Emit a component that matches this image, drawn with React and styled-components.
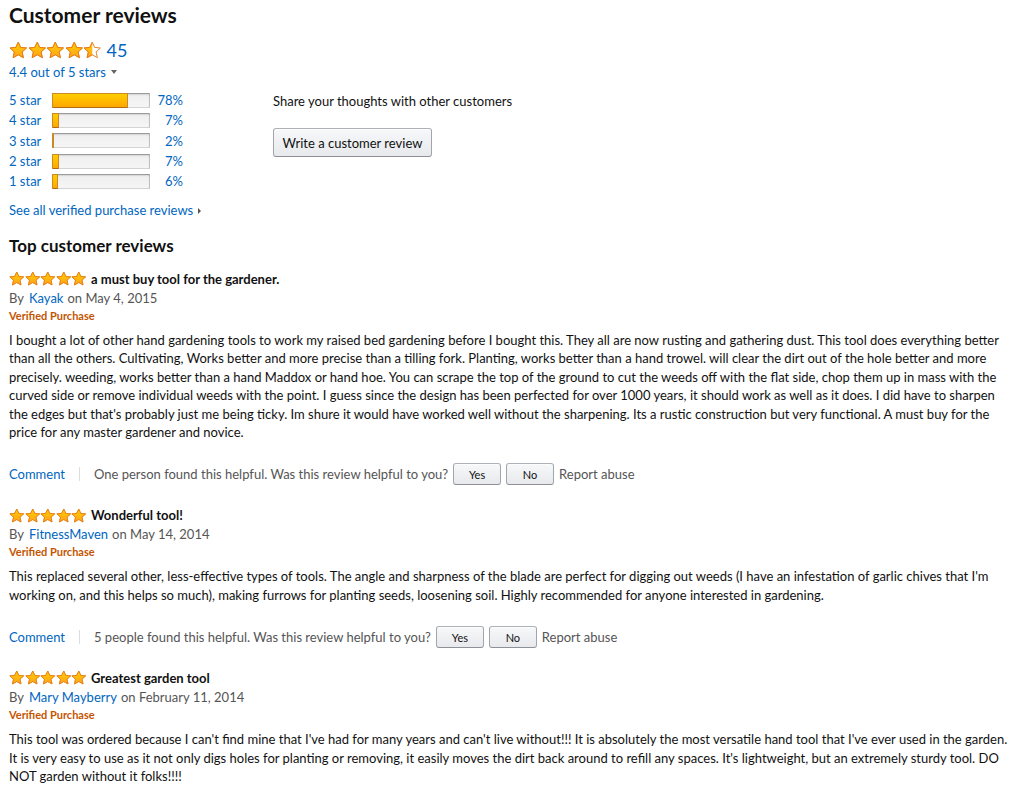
import styled, { createGlobalStyle } from 'styled-components';

const GlobalStyle = createGlobalStyle`
  body {
    margin: 0;
    background: #fff;
    color: #111;
    font-family: Lato, "Liberation Sans", Arial, sans-serif;
    font-size: 13px;
  }
`;

const Page = styled.div`
  padding: 0 9px;
`;

const Title = styled.h2`
  margin: 0;
  font-size: 21px;
  line-height: 30px;
  font-weight: 700;
`;

const Summary = styled.div`
  display: flex;
  gap: 9px;
`;

const LeftCol = styled.div`
  width: 255px;
`;

const RightCol = styled.div`
  padding-top: 62px;
`;

const RatingRow = styled.div`
  display: flex;
  align-items: center;
  margin-top: 7px;
  height: 26px;
  gap: 5px;
`;

const Count = styled.span`
  color: #0066c0;
  font-size: 18px;
`;

const Link = styled.a`
  color: #0066c0;
  text-decoration: none;
  line-height: 18px;
`;

const OutOf = styled.div`
  line-height: 18px;
  color: #0066c0;
`;

const Caret = styled.span`
  display: inline-block;
  margin-left: 5px;
  vertical-align: middle;
  border-left: 3.5px solid transparent;
  border-right: 3.5px solid transparent;
  border-top: 4px solid #666;
  position: relative;
  top: -2px;
`;

const Histogram = styled.div`
  margin-top: 9px;
`;

const HistRow = styled.div`
  display: flex;
  align-items: center;
  height: 20.3px;
`;

const HistLabel = styled.span`
  width: 43px;
  color: #0066c0;
`;

const Meter = styled.div`
  width: 98px;
  height: 15px;
  box-sizing: border-box;
  background: linear-gradient(to bottom, #eee, #f6f6f6);
  border-radius: 1px;
  box-shadow: inset 0 1px 2px rgba(0, 0, 0, 0.35), inset 0 0 0 1px rgba(0, 0, 0, 0.12);
  overflow: hidden;
`;

const MeterFill = styled.div`
  height: 100%;
  box-sizing: border-box;
  background: linear-gradient(to bottom, #ffce00, #ffa700);
  border: 1px solid #c88a22;
  border-bottom-color: #b06c0f;
  border-radius: 1px;
`;

const Pct = styled.span`
  width: 33px;
  text-align: right;
  color: #0066c0;
`;

const SeeAll = styled.div`
  margin-top: 9.5px;
  line-height: 18px;
  color: #0066c0;
`;

const RightCaret = styled.span`
  display: inline-block;
  margin-left: 5px;
  border-top: 3px solid transparent;
  border-bottom: 3px solid transparent;
  border-left: 3.5px solid #555;
  position: relative;
  top: -1px;
`;

const Share = styled.div`
  line-height: 18px;
`;

const Button = styled.button`
  display: block;
  font-family: inherit;
  color: #111;
  background: linear-gradient(to bottom, #f7f8fa, #e7e9ec);
  border: 1px solid;
  border-color: #adb1b8 #a2a6ac #8d9096;
  border-radius: 3px;
  box-shadow: 0 1px 0 rgba(255, 255, 255, 0.6) inset;
  cursor: pointer;
  padding: 0;
  font-size: ${p => (p.$small ? '11px' : '13px')};
  width: ${p => (p.$small ? '48px' : '159px')};
  height: ${p => (p.$small ? '22px' : '29px')};
  margin-top: ${p => (p.$small ? '0' : '18px')};
`;

const SectionTitle = styled.h3`
  margin: 15px 0 0;
  font-size: 17px;
  line-height: 24px;
  font-weight: 700;
`;

const Review = styled.div`
  margin-top: ${p => (p.$first ? '11px' : '20px')};
`;

const HeadRow = styled.div`
  display: flex;
  align-items: center;
  height: 20px;
  gap: 4.5px;
`;

const ReviewTitle = styled.span`
  font-weight: 700;
`;

const Byline = styled.div`
  line-height: 18px;
  color: #555;
  a {
    color: #0066c0;
    margin: 0 4px 0 5px;
  }
`;

const Verified = styled.div`
  line-height: 18px;
  color: #c45500;
  font-size: 11px;
  font-weight: 700;
`;

const Body = styled.p`
  margin: 6px 0 0;
  line-height: 18.4px;
`;

const ActionRow = styled.div`
  display: flex;
  align-items: center;
  height: 22px;
  margin-top: 22px;
  color: #555;
`;

const Sep = styled.span`
  width: 1px;
  height: 14px;
  background: #ddd;
  margin: 0 14px;
`;

const Gap = styled.span`
  width: ${p => p.$w}px;
`;

const STAR = '12,1.6 15.1,8.3 22.6,9.1 17,14.2 18.6,21.6 12,17.8 5.4,21.6 7,14.2 1.4,9.1 8.9,8.3';

const StarSvg = ({ size, part = 1, id }) => (
  <svg width={size} height={size} viewBox="0 0 24 24">
    <defs>
      <linearGradient id={`g${id}`} x1="0" y1="0" x2="0" y2="1">
        <stop offset="0" stopColor="#ffce00" />
        <stop offset="1" stopColor="#ffa41c" />
      </linearGradient>
      <clipPath id={`c${id}`}>
        <rect x="0" y="0" width={24 * part} height="24" />
      </clipPath>
    </defs>
    <polygon points={STAR} fill="#fff" stroke="#e47911" strokeWidth="1.2" strokeLinejoin="round" />
    <polygon
      points={STAR}
      fill={`url(#g${id})`}
      stroke="#e47911"
      strokeWidth="1.2"
      strokeLinejoin="round"
      clipPath={`url(#c${id})`}
    />
  </svg>
);

const StarsWrap = styled.span`
  display: inline-flex;
`;

const Stars = ({ value, size, prefix }) => (
  <StarsWrap>
    {[0, 1, 2, 3, 4].map(i => (
      <StarSvg
        key={i}
        id={`${prefix}${i}`}
        size={size}
        part={Math.max(0, Math.min(1, value - i))}
      />
    ))}
  </StarsWrap>
);

const hist = [
  ['5 star', 78],
  ['4 star', 7],
  ['3 star', 2],
  ['2 star', 7],
  ['1 star', 6],
];

const reviews = [
  {
    title: 'a must buy tool for the gardener.',
    author: 'Kayak',
    date: 'May 4, 2015',
    helpful: 'One person found this helpful.',
    body:
      "I bought a lot of other hand gardening tools to work my raised bed gardening before I bought this. They all are now rusting and gathering dust. This tool does everything better than all the others. Cultivating, Works better and more precise than a tilling fork. Planting, works better than a hand trowel. will clear the dirt out of the hole better and more precisely. weeding, works better than a hand Maddox or hand hoe. You can scrape the top of the ground to cut the weeds off with the flat side, chop them up in mass with the curved side or remove individual weeds with the point. I guess since the design has been perfected for over 1000 years, it should work as well as it does. I did have to sharpen the edges but that's probably just me being ticky. Im shure it would have worked well without the sharpening. Its a rustic construction but very functional. A must buy for the price for any master gardener and novice.",
  },
  {
    title: 'Wonderful tool!',
    author: 'FitnessMaven',
    date: 'May 14, 2014',
    helpful: '5 people found this helpful.',
    body:
      "This replaced several other, less-effective types of tools. The angle and sharpness of the blade are perfect for digging out weeds (I have an infestation of garlic chives that I'm working on, and this helps so much), making furrows for planting seeds, loosening soil. Highly recommended for anyone interested in gardening.",
  },
  {
    title: 'Greatest garden tool',
    author: 'Mary Mayberry',
    date: 'February 11, 2014',
    body:
      "This tool was ordered because I can't find mine that I've had for many years and can't live without!!! It is absolutely the most versatile hand tool that I've ever used in the garden. It is very easy to use as it not only digs holes for planting or removing, it easily moves the dirt back around to refill any spaces. It's lightweight, but an extremely sturdy tool. DO NOT garden without it folks!!!!",
  },
];

const App = () => (
  <Page>
    <GlobalStyle />
    <Title>Customer reviews</Title>
    <Summary>
      <LeftCol>
        <RatingRow>
          <Stars value={4.5} size={18.5} prefix="top" />
          <Count>45</Count>
        </RatingRow>
        <OutOf>
          4.4 out of 5 stars
          <Caret />
        </OutOf>
        <Histogram>
          {hist.map(([label, pct]) => (
            <HistRow key={label}>
              <HistLabel>{label}</HistLabel>
              <Meter>
                <MeterFill style={{ width: `${pct}%` }} />
              </Meter>
              <Pct>{pct}%</Pct>
            </HistRow>
          ))}
        </Histogram>
        <SeeAll>
          See all verified purchase reviews
          <RightCaret />
        </SeeAll>
      </LeftCol>
      <RightCol>
        <Share>Share your thoughts with other customers</Share>
        <Button>Write a customer review</Button>
      </RightCol>
    </Summary>
    <SectionTitle>Top customer reviews</SectionTitle>
    {reviews.map((r, idx) => (
      <Review key={r.author} $first={idx === 0}>
        <HeadRow>
          <Stars value={5} size={15.5} prefix={`r${idx}`} />
          <ReviewTitle>{r.title}</ReviewTitle>
        </HeadRow>
        <Byline>
          By<Link href="#">{r.author}</Link>on {r.date}
        </Byline>
        <Verified>Verified Purchase</Verified>
        <Body>{r.body}</Body>
        {r.helpful && (
          <ActionRow>
            <Link href="#">Comment</Link>
            <Sep />
            <span>{r.helpful} Was this review helpful to you?</span>
            <Gap $w={5} />
            <Button $small>Yes</Button>
            <Gap $w={5} />
            <Button $small>No</Button>
            <Gap $w={5} />
            <span>Report abuse</span>
          </ActionRow>
        )}
      </Review>
    ))}
  </Page>
);

export default App;
